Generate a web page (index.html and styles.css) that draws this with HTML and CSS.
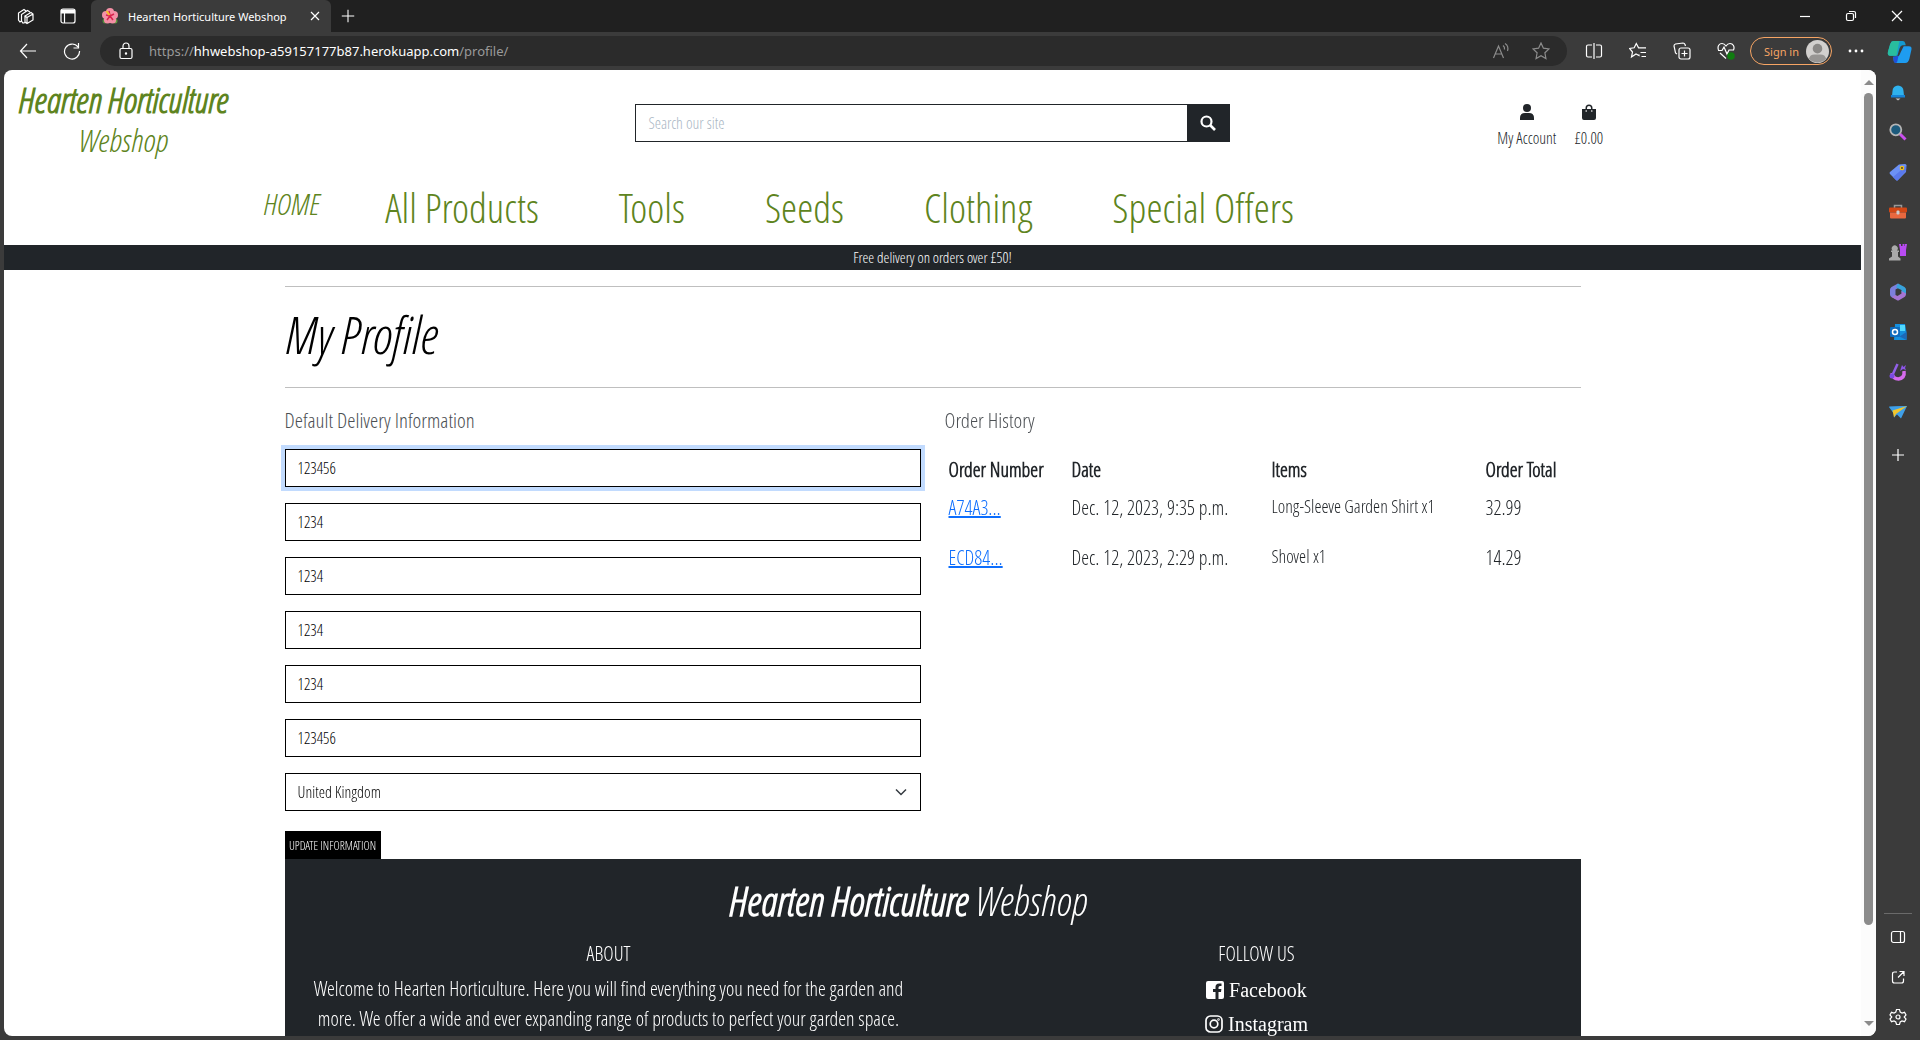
FILE: index.html
```html
<!DOCTYPE html>
<html lang="en">
<head>
<meta charset="utf-8">
<title>Hearten Horticulture Webshop</title>
<link rel="stylesheet" href="styles.css">
</head>
<body>
<div class="tabstrip">
  <button class="strip-btn" aria-label="Workspaces"><svg class="icon" viewBox="0 0 18 18"><path d="M5 13.500 3 15 1.500 13V6L7 2.500 9 4M8.500 15.500 6 16 4.500 14V7.500L10.500 3.500 13 5M8 9v6l2 1.500 6-3.500V7l-2-1.500L8 9l2 1.500V16M10 10.500 16 7"/></svg></button>
  <button class="strip-btn" aria-label="Tab actions"><svg class="icon" viewBox="0 0 18 18"><rect x="2" y="2" width="14" height="14" rx="2"/><path d="M2 3.500h14M2 5h14M5.500 5v11" /><path d="M2.500 3h13v3h-13z" fill="currentColor"/></svg></button>
  <div class="tab">
    <svg class="favicon" viewBox="0 0 16 16"><circle cx="3" cy="13" r="2.500" fill="#4f8b3c"/><circle cx="13" cy="13" r="2.500" fill="#5e9a3e"/><g fill="#f48fa5"><circle cx="8" cy="4" r="4"/><circle cx="12" cy="7" r="4"/><circle cx="4" cy="7" r="4"/><circle cx="5.500" cy="12" r="3.600"/><circle cx="10.500" cy="12" r="3.600"/></g><path d="M8 8 7 3M8 8l4-2M8 8l3 4M8 8l-3 4M8 8 4 7" stroke="#d8224d" stroke-width="1.500"/><path d="m7.500 7-3-4" stroke="#f5bd2d" stroke-width="2"/></svg>
    <span class="tab-title">Hearten Horticulture Webshop</span>
    <button class="tab-close" aria-label="Close tab"><svg class="icon small" viewBox="0 0 12 12"><path d="m2 2 8 8M10 2l-8 8"/></svg></button>
  </div>
  <button class="new-tab" aria-label="New tab"><svg class="icon" viewBox="0 0 18 18"><path d="M9 2v14M2 9h14"/></svg></button>
  <div class="window-controls">
    <button aria-label="Minimize"><svg class="icon small" viewBox="0 0 12 12"><path d="M1 6.500h10"/></svg></button>
    <button aria-label="Restore"><svg class="icon small" viewBox="0 0 12 12"><rect x="1.500" y="3.500" width="7" height="7" rx="1.500"/><path d="M4 1.500h5q1.500 0 1.500 1.500v5"/></svg></button>
    <button aria-label="Close"><svg class="icon small" viewBox="0 0 12 12"><path d="m1 1 10 10M11 1 1 11"/></svg></button>
  </div>
</div>

<div class="toolbar">
  <button class="tool" aria-label="Back"><svg class="icon" viewBox="0 0 18 18"><path d="M17 9H1.500M8 2 1.500 9 8 16"/></svg></button>
  <button class="tool" aria-label="Refresh"><svg class="icon" viewBox="0 0 18 18"><path d="M15 5A7.500 7.500 0 1 0 16.500 9M15.500 1v5h-5"/></svg></button>
  <div class="address">
    <svg class="icon" viewBox="0 0 18 18"><rect x="3" y="6.500" width="12" height="10" rx="1.500"/><path d="M6 6.500V4a3 3 0 0 1 6 0v2.500"/><circle cx="9" cy="11.500" r=".6" fill="currentColor"/></svg>
    <span class="url">https://<b>hhwebshop-a59157177b87.herokuapp.com</b>/profile/</span>
    <button class="dim" aria-label="Read aloud"><svg class="icon" viewBox="0 0 18 18"><path d="M1.500 16 6.500 4l5 12M3.500 12h6M11 3.500q2 1.500 1.500 4M13 1.500Q17 4 15.500 9"/></svg></button>
    <button class="dim" aria-label="Add to favorites"><svg class="icon" viewBox="0 0 18 18"><path d="m9 1 2.400 5.200 5.600.700-4.100 3.900 1 5.700L9 13.700l-4.900 2.800 1-5.700L1 6.900l5.600-.7z"/></svg></button>
  </div>
  <button class="tool" aria-label="Split screen"><svg class="icon" viewBox="0 0 18 18"><path d="M7 3H3Q1.500 3 1.500 4.500v9Q1.500 15 3 15h4M11 3h4q1.500 0 1.500 1.500v9Q16.500 15 15 15h-4M9 1v16"/></svg></button>
  <button class="tool" aria-label="Favorites"><svg class="icon" viewBox="0 0 18 18"><path d="M10 12.500v1L7 12l-4.500 3 1-5L.5 6.500l4.700-.7L7.300 1.500l2.300 4.300H17M11.500 10.500H17M12.500 14.500H17"/></svg></button>
  <button class="tool" aria-label="Collections"><svg class="icon" viewBox="0 0 18 18"><rect x="6" y="6" width="11" height="11" rx="2"/><path d="M11.500 8.500v6M8.500 11.500h6M4 12 2.500 11 1 4Q1 2.500 2.500 2L10 1q1.500 0 2 1.500L12.500 4"/></svg></button>
  <button class="tool" aria-label="Browser essentials"><svg class="icon" viewBox="0 0 18 18"><path d="M1.500 8C0 4 2.500 1.500 5 1.500c2 0 3 1 4 2.500 1-1.500 2-2.500 4-2.500 3 0 5 3 3.500 6.500M1 8.500h4L7 5l3 7 2-4h5M3 11l6 5.500"/><circle cx="14" cy="14" r="3.800" fill="#107c10" stroke="none"/></svg></button>
  <button class="signin">Sign in <svg class="avatar" viewBox="0 0 24 24"><circle cx="12" cy="12" r="12" fill="#d2d0ce"/><circle cx="12" cy="9" r="5" fill="#8a8886"/><path d="M3 19.500Q4 15 9 15h6q5 0 6 4.500-4 4-9 4t-9-4z" fill="#979593"/></svg></button>
  <button class="tool" aria-label="Settings and more"><svg class="icon" viewBox="0 0 18 18"><g fill="currentColor" stroke="none"><circle cx="3" cy="9" r="1.400"/><circle cx="9" cy="9" r="1.400"/><circle cx="15" cy="9" r="1.400"/></g></svg></button>
  <button class="tool narrow" aria-label="Copilot"><svg class="copilot" viewBox="0 0 24 24"><path d="M6 2h9q2 0 2.500 2l.5 2h-3q-2 0-3 3l-2 7H3q-3 0-2-4L3 5q1-3 3-3z" fill="#1499cf"/><path d="M6 2h6L9 16H3q-3 0-2-4L3 5q1-3 3-3z" fill="#29bd9e"/><path d="M16 7h5q3 0 2.500 3l-2 9q-1 4-4 4H9q-2 0-2.500-2L6 17h3q3 0 4-4z" fill="#1e9cf0"/><path d="m6 17 5-1-1 5q0 2-2 2t-2-6z" fill="#1f4fd8"/></svg></button>
</div>

<div class="workspace">
  <div class="viewport">
    <div class="site">
      <header class="site-header">
        <a class="logo" href="#"><strong>Hearten Horticulture</strong><span>Webshop</span></a>
        <form class="search">
          <input type="text" placeholder="Search our site" aria-label="Search our site">
          <button type="button" aria-label="Search"><svg viewBox="0 0 16 16"><circle cx="6.500" cy="6.500" r="5" fill="none" stroke="currentColor" stroke-width="2.200"/><path d="m10 10 5 5" stroke="currentColor" stroke-width="2.600"/></svg></button>
        </form>
        <div class="account">
          <a href="#"><svg viewBox="0 0 16 16"><circle cx="8" cy="4" r="4"/><path d="M1 16v-2q0-5 5-5h4q5 0 5 5v2z"/></svg>My Account</a>
          <a href="#"><svg viewBox="0 0 16 16"><path d="M1 5h3.500V4a3.500 3.500 0 0 1 7 0v1H15v9q0 2-2 2H3q-2 0-2-2zm5 0h4V4a2 2 0 0 0-4 0z"/><circle cx="5.200" cy="7" r=".8" fill="#fff"/><circle cx="10.800" cy="7" r=".8" fill="#fff"/></svg>£0.00</a>
        </div>
      </header>
      <nav class="main-nav">
        <a class="home" href="#">HOME</a>
        <a href="#">All Products</a>
        <a href="#">Tools</a>
        <a href="#">Seeds</a>
        <a href="#">Clothing</a>
        <a href="#">Special Offers</a>
      </nav>
      <div class="banner">Free delivery on orders over £50!</div>
      <main class="container">
        <h1>My Profile</h1>
        <div class="columns">
          <form class="delivery">
            <h2>Default Delivery Information</h2>
            <input class="active" type="text" value="123456" aria-label="Phone number" autofocus>
            <input type="text" value="1234" aria-label="Street address 1">
            <input type="text" value="1234" aria-label="Street address 2">
            <input type="text" value="1234" aria-label="Town or city">
            <input type="text" value="1234" aria-label="County">
            <input type="text" value="123456" aria-label="Postal code">
            <div class="select-wrap">
              <select aria-label="Country"><option>United Kingdom</option></select>
              <svg viewBox="0 0 12 12"><path d="m1 3.500 5 5 5-5" fill="none" stroke="#343a40" stroke-width="1.500"/></svg>
            </div>
            <button type="button">UPDATE INFORMATION</button>
          </form>
          <section class="orders">
            <h2>Order History</h2>
            <table>
              <colgroup><col class="c-num"><col class="c-date"><col class="c-items"><col></colgroup>
              <thead><tr><th>Order Number</th><th>Date</th><th>Items</th><th>Order Total</th></tr></thead>
              <tbody>
                <tr><td><a href="#">A74A3...</a></td><td>Dec. 12, 2023, 9:35 p.m.</td><td class="items">Long-Sleeve Garden Shirt x1</td><td>32.99</td></tr>
                <tr><td><a href="#">ECD84...</a></td><td>Dec. 12, 2023, 2:29 p.m.</td><td class="items">Shovel x1</td><td>14.29</td></tr>
              </tbody>
            </table>
          </section>
        </div>
        <footer class="site-footer">
          <p class="footer-title"><strong>Hearten Horticulture</strong> Webshop</p>
          <section>
            <h3>ABOUT</h3>
            <p>Welcome to Hearten Horticulture. Here you will find everything you need for the garden and more. We offer a wide and ever expanding range of products to perfect your garden space.</p>
          </section>
          <section>
            <h3>FOLLOW US</h3>
            <ul>
              <li><a href="#"><svg viewBox="0 0 18 18"><path d="M2 0h14q2 0 2 2v14q0 2-2 2h-3.500v-7H15l.4-3h-2.900V6.500q0-1.500 1.500-1.500h1.500V2.500h-2.300Q9.500 2.500 9.500 6v2H7v3h2.500v7H2q-2 0-2-2V2q0-2 2-2z" fill="currentColor"/></svg>Facebook</a></li>
              <li><a href="#"><svg viewBox="0 0 18 18" fill="none" stroke="currentColor" stroke-width="1.700"><rect x="1" y="1" width="16" height="16" rx="4.500"/><circle cx="9" cy="9" r="3.800"/><circle cx="13.500" cy="4.500" r=".4"/></svg>Instagram</a></li>
            </ul>
          </section>
        </footer>
      </main>
    </div>
    <div class="scrollbar"><span class="arrow up"></span><span class="thumb"></span><span class="arrow down"></span></div>
  </div>

  <aside class="sidebar">
    <button aria-label="Notifications"><svg viewBox="0 0 18 18"><path d="M2 14q1.500-2 1.500-6a5.500 5.500 0 0 1 11 0q0 4 1.500 6z" fill="#2fb2ee"/><path d="M2 12h14v2.500H2z" fill="#1683d6"/><path d="M6.500 15.500h5L9 17.500z" fill="#c8c6c4"/></svg></button>
    <button aria-label="Search"><svg viewBox="0 0 18 18"><path d="m11 11 5.500 5.500" stroke="#c94fee" stroke-width="3"/><circle cx="6.800" cy="6.800" r="5.500" fill="#1c5a7c" stroke="#b5b5b5" stroke-width="1.800"/></svg></button>
    <button aria-label="Shopping"><svg viewBox="0 0 18 18"><path d="M10 1.500 16 1q1.500 0 1.500 1.500L17 9l-8 8q-1 1-2 0l-6-6q-1-1 0-2z" fill="#6c91f6"/><path d="m17 8-8 9q-1 1-2 0l-3-3L17 3z" fill="#5a79ec"/><circle cx="13" cy="5" r="1.700" fill="#544c35" stroke="#f2c21a" stroke-width="1.300"/></svg></button>
    <button aria-label="Tools"><svg viewBox="0 0 18 18"><path d="M5.500 5V2.500h7V5" fill="none" stroke="#999" stroke-width="1.500"/><rect y="4.500" width="18" height="5" rx="1" fill="#d34715"/><path d="M1 9.500h16v5q0 1-1 1H2q-1 0-1-1z" fill="#e8683f"/><rect x="7.500" y="7.500" width="3" height="4" rx="1" fill="#ccc"/></svg></button>
    <button aria-label="Games"><svg viewBox="0 0 18 18"><path d="M10 1h2v2h1.500V1h2v2H16V1h2l-1 6v6h-6V7z" fill="#b84bf2"/><path d="M0 17.500v-2l3-2V9H2V7.500h1.500a3 3 0 1 1 4.500 0H10V9H9v4.500l2.500 2v2z" fill="#aaa"/></svg></button>
    <button aria-label="Microsoft 365"><svg viewBox="0 0 18 18"><path d="M9 .5 2.500 4Q1 5 1 6.500v5Q1 13 2.500 14l4 2V6.500L11 4z" fill="#7d7fdc"/><path d="m9 .5 6.500 3.500Q17 5 17 6.500V12l-4.500-2.500V7L7 4.500z" fill="#38a3dc"/><path d="M17 10.500q0 2.500-1.500 3.500L10 17.200q-1 .5-2 0L2.500 14l4-2 2 1 4-2.500V8z" fill="#a675d3"/></svg></button>
    <button aria-label="Outlook"><svg viewBox="0 0 18 18"><path d="M6 1h10l1.500 8v8H5z" fill="#1490df"/><path d="M11 2h5v6h-5z" fill="#50d9ff"/><path d="m17.500 9-7 4.500 7 3.500z" fill="#1c69b8"/><rect x="1" y="4" width="10" height="10" rx="1" fill="#0f6cbd"/><circle cx="6" cy="9" r="2.500" fill="none" stroke="#fff" stroke-width="1.500"/></svg></button>
    <button aria-label="Designer"><svg viewBox="0 0 18 18"><path d="M3 10q1 6 6.500 6Q16 15 15 8" fill="none" stroke="#d66bed" stroke-width="3.500"/><path d="m8.500 1-5 11" stroke="#9160e8" stroke-width="2.500"/><circle cx="3" cy="13" r="2.500" fill="#7b4be0"/><path d="m13 2 1.500 2L17 2l-1 3 1 2-3-1-3 2 1-3z" fill="#8d55e9"/></svg></button>
    <button aria-label="Drop"><svg viewBox="0 0 18 18"><path d="M0 4 18 3 4 9.500z" fill="#35a0ea"/><path d="M0 3.500 18 3l-6 12.500-4-4-3 3V9z" fill="#3f9fe8"/><path d="m18 3-14.500 4.500 1.500 7 2-3.500z" fill="#f1c52e"/></svg></button>
    <button class="customize" aria-label="Customize"><svg class="icon line" viewBox="0 0 18 18"><path d="M9 3v12M3 9h12"/></svg></button>
    <div class="sidebar-bottom">
      <button aria-label="Hide sidebar"><svg class="icon line" viewBox="0 0 18 18"><rect x="2.500" y="3.500" width="13" height="11" rx="2"/><path d="M11.500 3.500v11"/></svg></button>
      <button aria-label="Open in new window"><svg class="icon line" viewBox="0 0 18 18"><path d="M8 4H5.500Q3.500 4 3.500 6v7q0 2 2 2h7q2 0 2-2v-2.500M10.500 3.500H15V8M15 3.500l-6 6"/></svg></button>
      <button aria-label="Settings"><svg class="icon line" viewBox="0 0 18 18"><path d="M7.500 1.500h3l.7 2.500 1.800 1 2.500-.7 1.500 2.600L15.200 9l1.800 2.100-1.500 2.600-2.500-.7-1.800 1-.7 2.500h-3L6.800 14 5 13l-2.500.7L1 11.100 2.800 9 1 6.900l1.500-2.600L5 5l1.800-1z"/><circle cx="9" cy="9" r="2"/></svg></button>
    </div>
  </aside>
</div>
</body>
</html>
```
FILE: styles.css
```css
* { box-sizing: border-box; }
body {
  margin: 0;
  height: 100vh;
  display: flex;
  flex-direction: column;
  overflow: hidden;
  background: #3b3b3b;
  color: #fff;
  font-family: "Noto Sans", sans-serif;
}
button { font: inherit; color: inherit; background: none; border: 0; padding: 0; margin: 0; }
h1, h2, h3, p, ul { margin: 0; padding: 0; font-weight: 400; }
a { color: inherit; text-decoration: none; }
svg { display: block; flex: none; }
.icon { width: 18px; height: 18px; fill: none; stroke: currentColor; stroke-width: 1.2; }
.icon.small { width: 12px; height: 12px; }

/* Browser chrome */
.tabstrip { display: flex; height: 32px; flex: none; background: #202020; padding-left: 5px; }
.strip-btn { width: 42px; display: grid; place-items: center; }
.tab {
  display: flex;
  align-items: center;
  width: 240px;
  margin-left: 2px;
  padding: 0 10px 0 11px;
  background: #3b3b3b;
  border-radius: 6px 6px 0 0;
}
.favicon { width: 16px; height: 16px; margin-right: 10px; }
.tab-title { flex: 1; font-size: 11px; white-space: nowrap; }
.new-tab { width: 34px; display: grid; place-items: center; }
.new-tab .icon { width: 16px; height: 16px; }
.window-controls { display: flex; margin-left: auto; }
.window-controls button { width: 46px; display: grid; place-items: center; }

.toolbar { display: flex; align-items: center; height: 38px; flex: none; padding-left: 6px; }
.tool { width: 44px; height: 30px; display: grid; place-items: center; }
.tool.narrow { width: 42px; }
.address {
  flex: 1;
  display: flex;
  align-items: center;
  height: 30px;
  margin: 0 5px 0 6px;
  padding: 0 17px;
  background: #2b2b2b;
  border-radius: 15px;
}
.url { flex: 1; margin-left: 14px; font-size: 13px; color: #9a9a9a; }
.url b { font-weight: 400; color: #fff; }
.dim { color: #8c8c8c; margin-left: 22px; }
.signin {
  display: flex;
  align-items: center;
  justify-content: space-between;
  width: 82px;
  height: 28px;
  margin: 0 2px;
  padding: 0 2px 0 13px;
  border: 1px solid #f7a564;
  border-radius: 14px;
  color: #f7a564;
  font-size: 11px;
  white-space: nowrap;
}
.avatar { width: 23px; height: 23px; }
.copilot { width: 25px; height: 25px; }

.workspace { flex: 1; display: flex; min-height: 0; }
.viewport {
  flex: 1;
  display: flex;
  min-width: 0;
  margin: 0 0 4px 4px;
  background: #fff;
  border-radius: 8px;
  overflow: hidden;
}
.scrollbar {
  width: 15px;
  display: flex;
  flex-direction: column;
  align-items: center;
  padding: 10px 0;
  background: #fcfcfc;
}
.arrow { border: 5px solid transparent; }
.arrow.up { border-top: 0; border-bottom-color: #8b8b8b; }
.arrow.down { border-bottom: 0; border-top-color: #8b8b8b; margin-top: auto; }
.thumb { width: 9px; height: 88%; margin-top: 8px; border-radius: 5px; background: #8b8b8b; }

.sidebar { width: 44px; display: flex; flex-direction: column; align-items: center; padding: 2px 0 3px; }
.sidebar button { width: 40px; height: 40px; display: grid; place-items: center; }
.sidebar .customize { margin-top: 3px; }
.sidebar svg { width: 18px; height: 18px; }
.sidebar-bottom { margin-top: auto; padding-top: 3px; border-top: 1px solid #6a6a6a; width: 28px; display: grid; justify-content: center; }

/* Webshop page */
.site {
  flex: 1;
  min-width: 0;
  overflow: hidden;
  color: #212529;
  font-family: "Open Sans Condensed Light", "Roboto Condensed", "Liberation Sans", sans-serif;
}
.site-header { display: grid; grid-template-columns: 1fr 32% 1fr; height: 108px; align-items: start; }
.logo {
  display: grid;
  justify-self: start;
  justify-items: center;
  padding: 10px 0 0 14px;
  color: #5e8420;
  font-size: 32px;
  line-height: 40px;
  font-style: italic;
}
.logo strong { font-size: 35px; }
.search { display: flex; height: 38px; margin-top: 34px; border: 1px solid #212529; }
.search input { flex: 1; min-width: 0; border: 0; padding: 0 12px; font: inherit; font-size: 16px; outline: 0; }
.search input::placeholder { color: #aab7c4; opacity: 1; }
.search button { width: 42px; background: #212529; color: #fff; display: grid; place-items: center; }
.search svg { width: 16px; height: 16px; }
.account { display: flex; justify-content: center; gap: 18px; padding: 34px 0 0 10px; font-size: 16px; line-height: 20px; }
.account a { display: grid; justify-items: center; gap: 8px; }
.account svg { width: 16px; height: 16px; fill: #212529; }

.main-nav { display: flex; align-items: center; gap: 80px; height: 67px; padding: 0 0 10px 259px; color: #5e8420; font-size: 41px; line-height: 48px; }
.main-nav a { white-space: nowrap; }
.main-nav .home { font-size: 30px; font-style: italic; margin-right: -14px; padding-bottom: 6px; }
.banner { height: 25px; line-height: 25px; background: #212529; color: #fff; text-align: center; font-size: 15px; }

.container { max-width: 1296px; margin: 0 auto; padding-top: 16px; }
.container h1 {
  height: 102px;
  border: 1px solid #bfbfbf;
  border-width: 1px 0;
  color: #000;
  font-size: 52px;
  font-style: italic;
  line-height: 94px;
}
.columns { display: grid; grid-template-columns: 1fr 1fr; gap: 24px; margin-top: 20px; }
.columns h2 { font-size: 21px; line-height: 24px; margin-bottom: 17px; color: #4b4f53; }
.delivery input, .delivery select {
  display: block;
  width: 100%;
  height: 38px;
  margin-bottom: 16px;
  padding: 0 12px;
  border: 1px solid #000;
  border-radius: 0;
  background: #fff;
  color: #000;
  font: inherit;
  font-size: 16px;
  outline: 0;
}
.delivery .active { box-shadow: 0 0 0 4px #c2dbfe; }
.delivery select { appearance: none; margin: 0; }
.select-wrap { position: relative; margin-bottom: 20px; }
.select-wrap svg { position: absolute; right: 14px; top: 13px; width: 12px; height: 12px; }
.delivery button { display: block; width: 96px; height: 28px; background: #000; color: #fff; font-size: 12px; white-space: nowrap; }

.orders table { width: 100%; table-layout: fixed; border-collapse: collapse; font-size: 20px; line-height: 27px; }
.c-num { width: 123px; }
.c-date { width: 200px; }
.c-items { width: 214px; }
.orders th, .orders td { padding: 7px 4px 5px; text-align: left; vertical-align: top; white-space: nowrap; }
.orders td { height: 50px; padding-top: 6px; }
.orders .items { font-size: 18px; line-height: 24px; }
.orders td a { color: #0d6efd; text-decoration: underline; }

.site-footer {
  display: grid;
  grid-template-columns: 1fr 1fr;
  background: #212529;
  color: #fff;
  text-align: center;
}
.site-footer h3 { font-size: 20px; line-height: 30px; margin-bottom: 5px; }
.site-footer p { font-size: 20px; line-height: 30px; }
.site-footer .footer-title { grid-column: 1 / -1; padding: 18px 50px 0 0; font-size: 40px; line-height: 48px; font-style: italic; }
.site-footer section { padding: 14px 18px 20px; }
.site-footer ul { list-style: none; font-family: "Liberation Serif", serif; font-size: 20px; line-height: 32px; }
.site-footer li a { display: inline-flex; align-items: center; gap: 5px; }
.site-footer li svg { width: 18px; height: 18px; }
```
